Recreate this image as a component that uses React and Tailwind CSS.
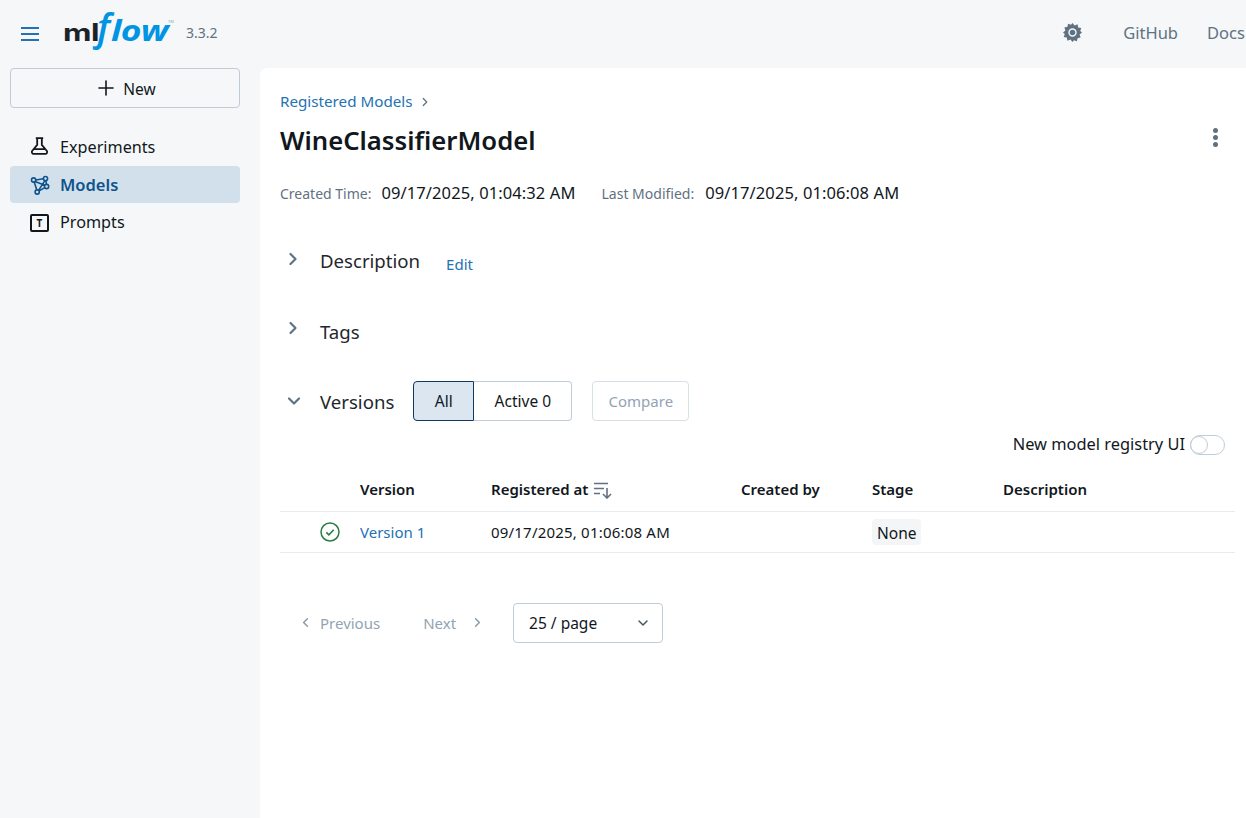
import React from "react";
import { Plus, ChevronRight, ChevronDown, ChevronLeft } from "lucide-react";

const F = "[font-family:'Noto_Sans',sans-serif]";

function Gear() {
  return (
    <svg width="19" height="19" viewBox="0 0 18 18" className="text-[#5f7281]">
      <path fill="currentColor" fillRule="evenodd" d="M9 0l2 2.3 2.8-1 .6 2.9 2.9.6-1 2.8L18 9l-2.3 2 1 2.8-2.9.6-.6 2.9-2.8-1L9 18l-2-2.3-2.8 1-.6-2.9-2.9-.6 1-2.8L0 9l2.3-2-1-2.8 2.9-.6.6-2.9 2.8 1L9 0zm0 5a4 4 0 100 8 4 4 0 000-8z" />
      <circle cx="9" cy="9" r="2.6" fill="currentColor" />
    </svg>
  );
}

function ModelsIcon() {
  return (
    <svg width="20" height="20" viewBox="0 0 20 20" fill="none" stroke="#0e538b" strokeWidth="1.6">
      <circle cx="3.6" cy="5" r="2.1" />
      <circle cx="15.5" cy="3.6" r="2.1" />
      <circle cx="16.6" cy="11.5" r="2.1" />
      <circle cx="7.2" cy="17" r="2.1" />
      <path d="M5.7 5l7.7-1.2M5 6.6l9.8 3.7M4.2 7l2.6 7.9M14.9 5.6l-6.3 9.8M14.8 12.6l-5.7 3.3M16 5.7l.4 3.7" />
    </svg>
  );
}

function SortIcon() {
  return (
    <svg width="20" height="18" viewBox="0 0 20 18" fill="none" stroke="#5f7281" strokeWidth="1.6">
      <path d="M1 2.5h14M1 7.5h10M1 12.5h6M14 7v10M10 13l4 4 4-4" />
    </svg>
  );
}

function Logo() {
  return (
    <div className="flex items-baseline h-[40px] select-none">
      <span className="w-[34px] inline-block origin-left scale-x-[1.3] [font-family:'Inter',sans-serif] font-bold text-[24px] leading-none tracking-[-0.3px] text-[#1b2329]">ml</span>
      <span className="w-[14px] inline-block [font-family:'Open_Sans',sans-serif] italic font-semibold text-[38px] leading-none text-[#0194e2]">f</span>
      <span className="w-[57px] inline-block origin-left scale-x-[1.22] [font-family:'Open_Sans',sans-serif] italic font-bold text-[29px] leading-none tracking-[-0.6px] text-[#0194e2]">low</span>
      <span className="text-[4px] text-[#8aa] self-start mt-[12px]">TM</span>
    </div>
  );
}

function Th({ children }) {
  return <div className="font-semibold text-[#11171c] flex items-center gap-[5px]">{children}</div>;
}

export default function App() {
  return (
    <div className={`${F} h-[818px] w-[1246px] overflow-hidden bg-[#f5f7f9] text-[#11171c] text-[15px] flex flex-col`}>
      <header className="h-[68px] shrink-0 flex items-center">
        <svg width="18" height="14" viewBox="0 0 18 14" className="ml-[21px]" stroke="#2272b4" strokeWidth="2">
          <path d="M0 1h18M0 7h18M0 13h18" />
        </svg>
        <div className="ml-[24px] w-[123px] -mt-[14px]"><Logo /></div>
        <span className="text-[14px] text-[#5f7281] -mt-[3px]">3.3.2</span>
        <div className="ml-auto flex items-center text-[#5f7281] text-[16.5px] -mt-[3px] whitespace-nowrap">
          <span className="-ml-[1px]"><Gear /></span>
          <span className="ml-[41px] mt-[2px]">GitHub</span>
          <span className="ml-[29px] w-[39px] mt-[2px]">Docs</span>
        </div>
      </header>
      <div className="flex flex-1 min-h-0">
        <aside className="w-[260px] shrink-0 pl-[10px] pr-[20px]">
          <button className="w-full h-[40px] rounded border border-[#c0cdd8] flex items-center justify-center gap-[5px] text-[15.5px]">
            <Plus size={24} strokeWidth={1.6} />
            <span className="mt-[4px]">New</span>
          </button>
          <nav className="mt-[20px] flex flex-col gap-px">
            <div className="h-[37px] flex items-center pl-[20px] gap-[11px]">
              <svg width="19" height="19" viewBox="0 0 18 18" fill="none" stroke="#11171c" strokeWidth="1.7">
                <path d="M5.5 1h7M6.8 1v6.5L2.2 13a1.8 1.8 0 001.4 3h10.8a1.8 1.8 0 001.4-3l-4.6-5.5V1M3 11.5h12" />
              </svg>
              <span className="text-[16.2px] mt-[2px]">Experiments</span>
            </div>
            <div className="h-[37px] flex items-center pl-[20px] gap-[11px] bg-[#d2e0ec] rounded text-[#0e538b] font-semibold">
              <ModelsIcon />
              <span className="text-[16.5px] -ml-[1px] mt-[2px]">Models</span>
            </div>
            <div className="h-[37px] flex items-center pl-[20px] gap-[11px]">
              <span className="w-[19px] h-[18px] border-2 border-[#11171c] rounded-[2px] flex items-center justify-center text-[10px] font-bold leading-none">T</span>
              <span className="text-[16.2px]">Prompts</span>
            </div>
          </nav>
        </aside>
        <main className="flex-1 bg-white rounded-tl-lg pl-[20px] pr-[11px] min-w-0">
          <div className="h-[68px] pt-[21px] flex items-start text-[15.2px] leading-[24px]">
            <span className="text-[#2272b4]">Registered Models</span>
            <ChevronRight size={14} strokeWidth={2.2} className="ml-[6px] mt-[6px] text-[#5f7281]" />
          </div>
          <div className="h-[40px] -mt-[16px] flex items-center justify-between pr-[15px]">
            <h1 className="text-[25.7px] font-semibold leading-none mt-[2px]">WineClassifierModel</h1>
            <div className="flex flex-col gap-[2px] mr-[2px] mt-[-6px]">
              <i className="block w-[5px] h-[5px] rounded-full bg-[#5f7281]" />
              <i className="block w-[5px] h-[5px] rounded-full bg-[#5f7281]" />
              <i className="block w-[5px] h-[5px] rounded-full bg-[#5f7281]" />
            </div>
          </div>
          <div className="mt-[21px] h-[24px] flex items-center whitespace-nowrap">
            <span className="text-[14px] text-[#5f7281]">Created Time:</span>
            <span className="ml-[10px] text-[16.5px] tracking-[0.1px]">09/17/2025, 01:04:32 AM</span>
            <span className="ml-[26px] text-[14px] text-[#5f7281]">Last Modified:</span>
            <span className="ml-[11px] text-[16.5px] tracking-[0.1px]">09/17/2025, 01:06:08 AM</span>
          </div>
          <div className="mt-[38px] h-[36px] flex items-center">
            <ChevronRight size={20} strokeWidth={2.6} className="ml-[3px] -mt-[4px] text-[#5f7281]" />
            <span className="ml-[17px] text-[18.6px] text-[#1f272d]">Description</span>
            <span className="ml-[26px] mt-[6px] text-[15px] text-[#2272b4]">Edit</span>
          </div>
          <div className="mt-[35px] h-[36px] flex items-center">
            <ChevronRight size={20} strokeWidth={2.6} className="ml-[3px] -mt-[8px] text-[#5f7281]" />
            <span className="ml-[17px] text-[18.6px] text-[#1f272d]">Tags</span>
          </div>
          <div className="mt-[31px] h-[40px] flex items-center">
            <ChevronDown size={20} strokeWidth={2.6} className="ml-[4px] text-[#5f7281]" />
            <span className="ml-[16px] text-[18.6px] text-[#1f272d] mt-[2px]">Versions</span>
            <div className="ml-[19px] flex h-[40px] text-[15.5px]">
              <div className="w-[61px] pt-[2px] flex items-center justify-center bg-[#dbe6f1] border border-[#0e3a60] rounded-l">All</div>
              <div className="w-[98px] pt-[2px] flex items-center justify-center border border-l-0 border-[#c0cdd8] rounded-r">Active 0</div>
            </div>
            <div className="ml-[20px] w-[97px] h-[40px] flex items-center justify-center border border-[#d8e0e7] rounded text-[15px] text-[#92a4b3]">Compare</div>
          </div>
          <div className="mt-[10px] h-[27px] flex items-center justify-end pr-[10px] text-[16.4px]">
            <span>New model registry UI</span>
            <span className="ml-[5px] w-[35px] h-[20px] rounded-full border border-[#c0cdd8] flex">
              <span className="w-[18px] h-[18px] rounded-full border border-[#c0cdd8] -ml-px" />
            </span>
          </div>
          <div className="mt-[10px] text-[15px]">
            <div className="h-[44px] grid grid-cols-[80px_131px_250px_131px_131px_1fr] items-center border-b border-[#e8ecf0]">
              <div />
              <Th>Version</Th>
              <Th>Registered at <SortIcon /></Th>
              <Th>Created by</Th>
              <Th>Stage</Th>
              <Th>Description</Th>
            </div>
            <div className="h-[41px] grid grid-cols-[80px_131px_250px_131px_131px_1fr] items-center border-b border-[#e8ecf0]">
              <div className="flex justify-end pr-[20px]">
                <svg width="20" height="20" viewBox="0 0 20 20" fill="none" stroke="#277c43">
                  <circle cx="10" cy="10" r="9" strokeWidth="1.5" />
                  <path d="M6.3 10.3l2.6 2.5 4.8-5" strokeWidth="1.6" />
                </svg>
              </div>
              <div className="text-[#2272b4]">Version 1</div>
              <div className="tracking-[0.2px]">09/17/2025, 01:06:08 AM</div>
              <div />
              <div><span className="inline-flex items-center h-[26px] px-[5px] pt-[3px] bg-[#f4f5f6] rounded text-[15.5px]">None</span></div>
              <div />
            </div>
          </div>
          <div className="mt-[50px] h-[40px] flex items-center text-[15px] text-[#92a4b3]">
            <ChevronLeft size={15} strokeWidth={2.4} className="ml-[18px] -mt-[2px] text-[#8a9aa8]" />
            <span className="ml-[7px] mt-[1px]">Previous</span>
            <span className="ml-[43px] mt-[1px]">Next</span>
            <ChevronRight size={15} strokeWidth={2.4} className="ml-[14px] -mt-[2px] text-[#8a9aa8]" />
            <div className="ml-[28px] w-[150px] h-[40px] rounded border border-[#c0cdd8] flex items-center justify-between pl-[15px] pr-[11px] text-[15.5px] text-[#11171c]">
              <span className="mt-[2px]">25 / page</span>
              <ChevronDown size={16} strokeWidth={2.2} className="text-[#445560]" />
            </div>
          </div>
        </main>
      </div>
    </div>
  );
}
